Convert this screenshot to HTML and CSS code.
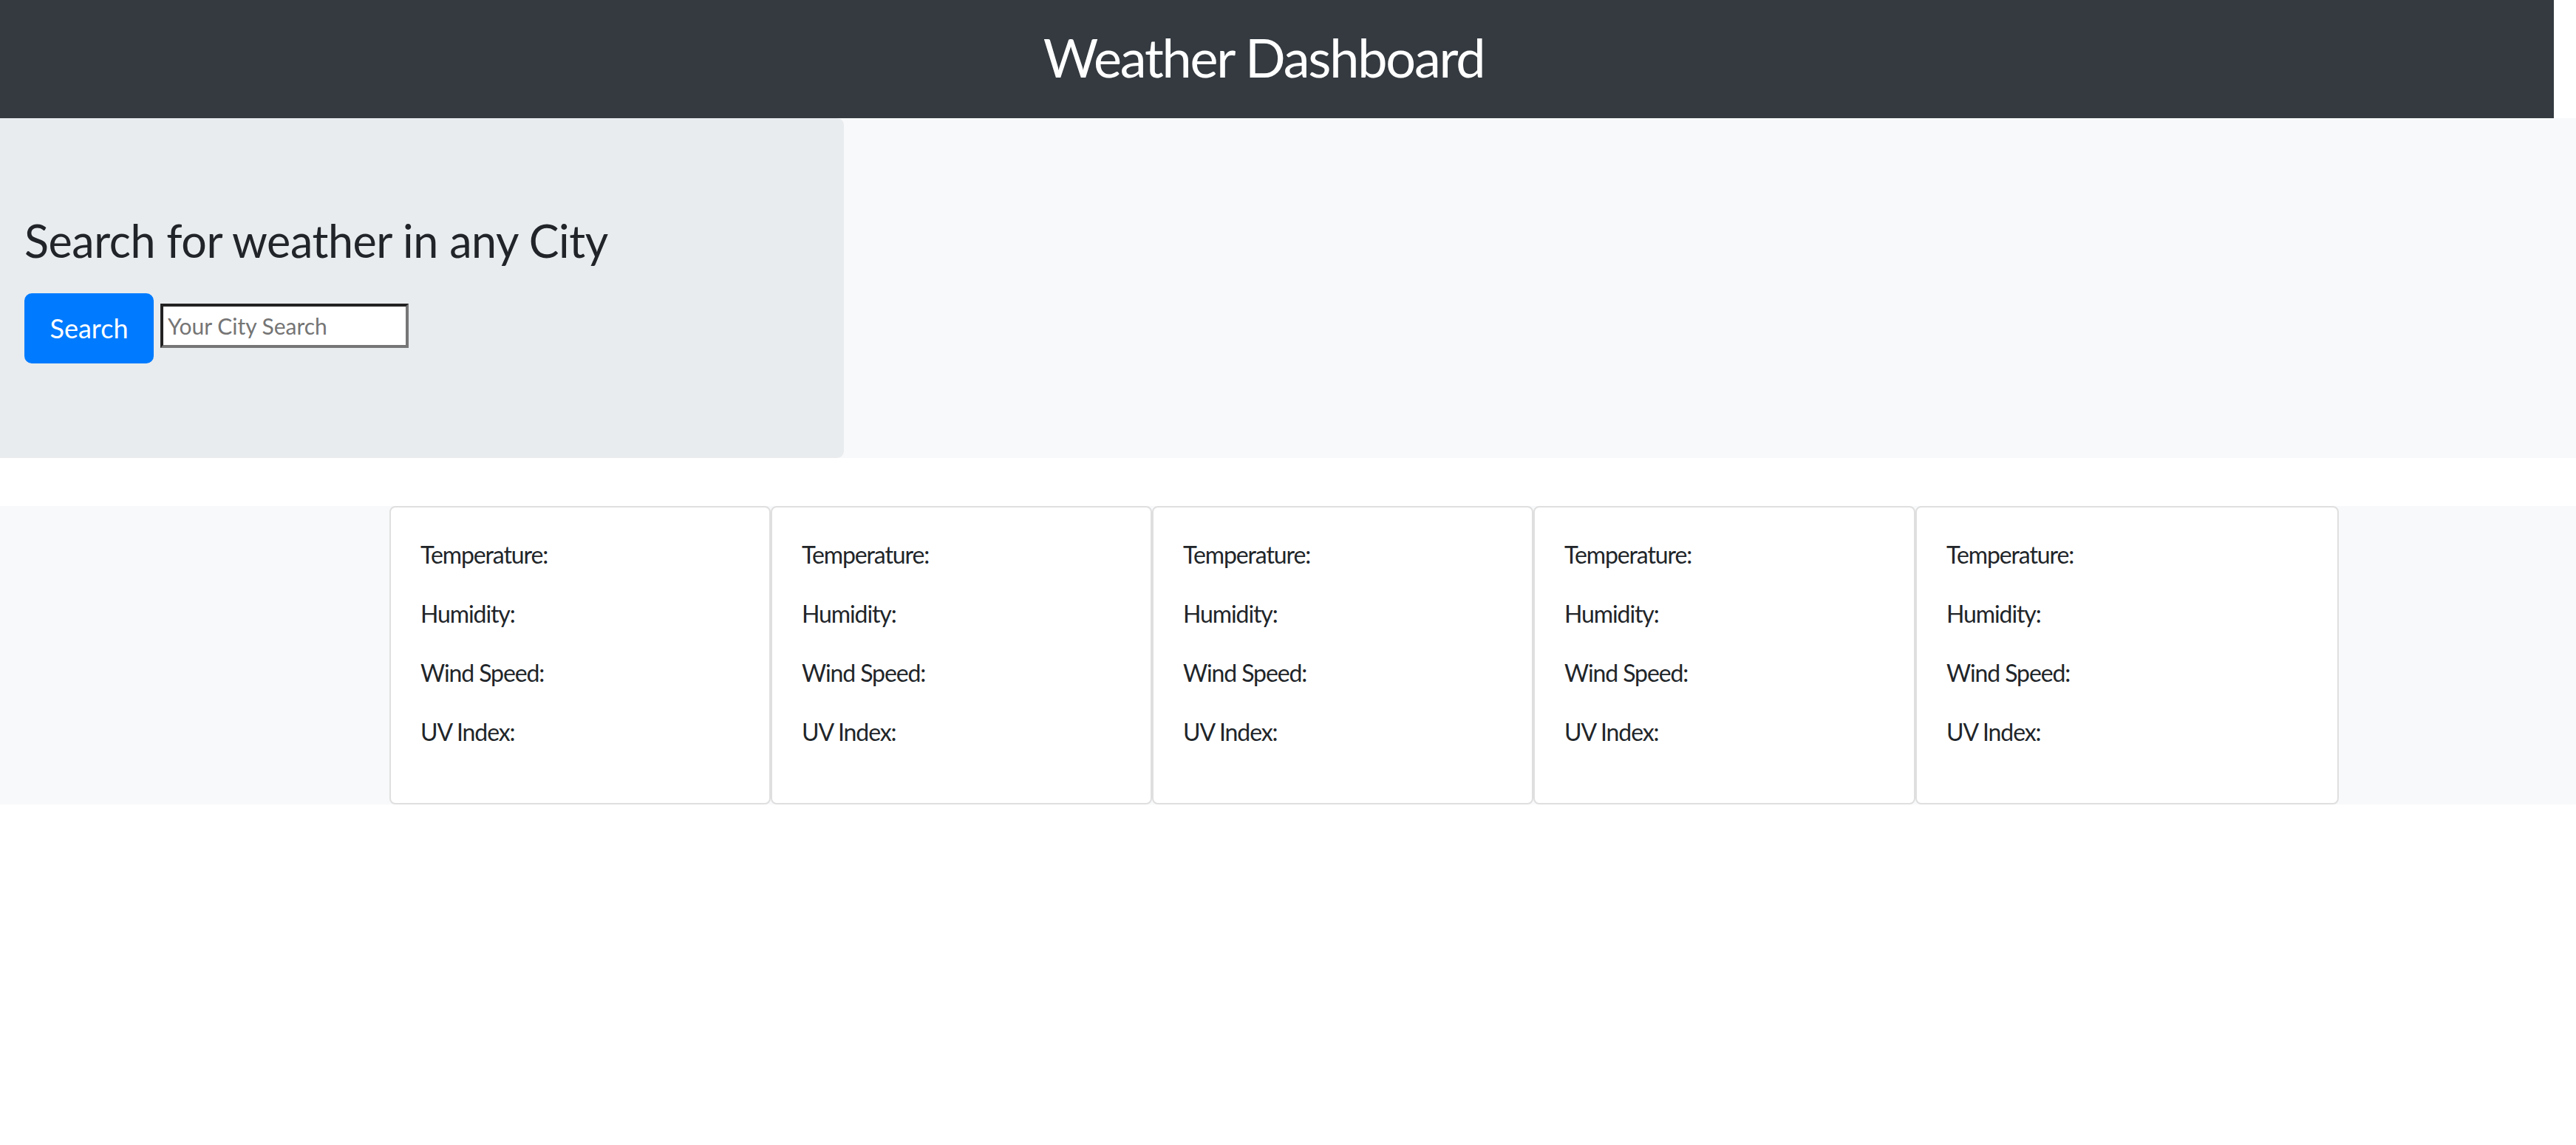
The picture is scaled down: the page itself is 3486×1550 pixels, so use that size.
FILE: index.html
```html
<!DOCTYPE html>
<html lang="en">
<head>
<meta charset="utf-8">
<title>Weather Dashboard</title>
<link rel="stylesheet" href="styles.css">
</head>
<body>
<header class="topbar">
  <h1 class="title">Weather Dashboard</h1>
</header>
<section class="hero-row">
  <div class="jumbo">
    <h2 class="jumbo-heading">Search for weather in any City</h2>
    <form class="search-form">
      <button type="button" class="btn-search">Search</button>
      <input class="city-input" type="text" placeholder="Your City Search">
    </form>
  </div>
</section>
<section class="forecast-row">
  <div class="card"><p>Temperature:</p><p>Humidity:</p><p>Wind Speed:</p><p>UV Index:</p></div>
  <div class="card"><p>Temperature:</p><p>Humidity:</p><p>Wind Speed:</p><p>UV Index:</p></div>
  <div class="card"><p>Temperature:</p><p>Humidity:</p><p>Wind Speed:</p><p>UV Index:</p></div>
  <div class="card"><p>Temperature:</p><p>Humidity:</p><p>Wind Speed:</p><p>UV Index:</p></div>
  <div class="card"><p>Temperature:</p><p>Humidity:</p><p>Wind Speed:</p><p>UV Index:</p></div>
</section>
</body>
</html>
```
FILE: styles.css
```css
* { box-sizing: border-box; }

body {
  margin: 0;
  font-family: "Lato", "Open Sans", sans-serif;
  color: #212529;
  background: #ffffff;
}

.topbar {
  width: calc(100% - 30px);
  height: 160px;
  background: #343a40;
  display: flex;
  align-items: center;
  justify-content: center;
  padding-right: 36px;
  padding-bottom: 6px;
}

.title {
  margin: 0;
  color: #ffffff;
  font-weight: 400;
  font-size: 72px;
  line-height: 1.2;
  letter-spacing: -2.2px;
}

.hero-row {
  background: #f8f9fa;
  height: 460px;
}

.jumbo {
  width: 1142px;
  height: 460px;
  background: #e9ecef;
  border-radius: 0 9px 9px 0;
  padding: 128px 32px 0 33px;
}

.jumbo-heading {
  margin: 0 0 32px 0;
  font-weight: 400;
  font-size: 61px;
  line-height: 76.8px;
  letter-spacing: -0.4px;
  color: #212529;
}

.search-form {
  display: flex;
  align-items: flex-start;
  gap: 9px;
}

.btn-search {
  width: 175px;
  height: 95px;
  background: #007bff;
  color: #ffffff;
  border: 2px solid #007bff;
  border-radius: 10px;
  font-family: "Lato", "Open Sans", sans-serif;
  font-size: 36px;
  font-weight: 400;
  padding: 0;
}

.city-input {
  margin-top: 14px;
  width: 336px;
  height: 60px;
  border-style: solid;
  border-width: 4px;
  border-color: #222222 #767676 #767676 #222222;
  background: #ffffff;
  font-family: "Lato", "Open Sans", sans-serif;
  font-size: 30px;
  padding: 0 6px;
  color: #212529;
  outline: none;
}

.city-input::placeholder {
  color: #757575;
}

.forecast-row {
  margin-top: 65px;
  background: #f8f9fa;
  display: grid;
  grid-template-columns: 516px 516px 516px 517px 573px;
  padding-left: 527px;
}

.card {
  background: #ffffff;
  border: 2px solid #dfdfdf;
  border-radius: 8px;
  padding: 40px 40px 40px 40px;
}

.card p {
  margin: 0 0 32px 0;
  font-size: 32px;
  line-height: 48px;
  letter-spacing: -1.1px;
  color: #212529;
}
```
